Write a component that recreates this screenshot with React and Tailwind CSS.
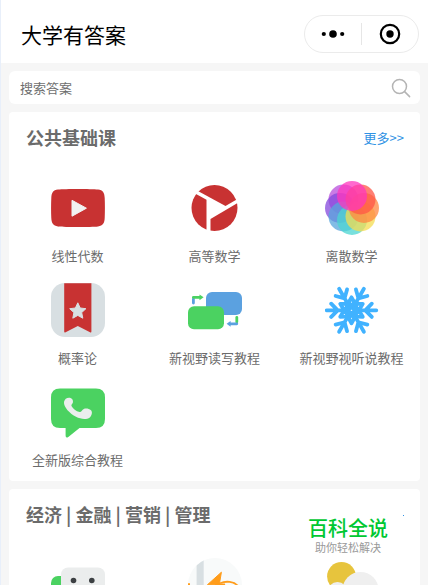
const VideoIcon = () => (
  <svg viewBox="0 0 54 54" className="size-[54px]">
    <path d="M7 8.6C14 7.8 40 7.8 47 8.6C52 9.2 53.5 12 53.7 17C54 23 54 31 53.7 37C53.5 42 52 44.8 47 45.4C40 46.2 14 46.2 7 45.4C2 44.8 .5 42 .3 37C0 31 0 23 .3 17C.5 12 2 9.2 7 8.6Z" fill="#c83232" />
    <path d="M21 19.3L35.4 27.2L21 35.2Z" fill="#f2f2f2" stroke="#f2f2f2" strokeLinejoin="round" />
  </svg>
);

const PlayCircleIcon = () => (
  <svg viewBox="0 0 54 54" className="size-[54px]">
    <clipPath id="play-circle">
      <circle cx="26.5" cy="27" r="23" />
    </clipPath>
    <g clipPath="url(#play-circle)" fill="#c83232">
      <path d="M0 8.5L18.5 18.8V54H0Z" />
      <path d="M0 4.5L37.5 25L54 15.4V0H0Z" />
      <path d="M54 19.3L22.5 38V54H54Z" />
    </g>
  </svg>
);

const petals = [
  { cx: 18.5, cy: 18.5, fill: "#b84fdc" },
  { cx: 15, cy: 27, fill: "#8448dc" },
  { cx: 18.5, cy: 35.5, fill: "#58a5dc" },
  { cx: 27, cy: 39, fill: "#4bd5d2" },
  { cx: 35.5, cy: 35.5, fill: "#f4dc50" },
  { cx: 39, cy: 27, fill: "#ff8740" },
  { cx: 35.5, cy: 18.5, fill: "#ff5546" },
  { cx: 27, cy: 15, fill: "#ff37be" },
];

const PetalsIcon = () => (
  <svg viewBox="0 0 54 54" className="size-[54px]">
    {petals.map((p, i) => (
      <circle key={i} cx={p.cx} cy={p.cy} r="15" fill={p.fill} opacity="0.75" />
    ))}
  </svg>
);

const BookmarkIcon = () => (
  <svg viewBox="0 0 54 54" className="size-[54px]">
    <rect width="54" height="54" rx="14" fill="#d8dfe2" />
    <path d="M13.2 .3H40.4V48.5Q40.4 50 39 49.3L26.8 43L14.6 49.3Q13.2 50 13.2 48.5Z" fill="#c83232" />
    <path d="M26.8 19.8L29.2 25L34.9 25.7L30.7 29.6L31.8 35.2L26.8 32.4L21.8 35.2L22.9 29.6L18.7 25.7L24.4 25Z" fill="#d8dfe2" stroke="#d8dfe2" strokeLinejoin="round" />
  </svg>
);

const ExchangeIcon = () => (
  <svg viewBox="0 0 54 54" className="size-[54px]">
    <rect x="18" y="9" width="36" height="23" rx="6" fill="#5ba1e0" />
    <rect x="0" y="23.3" width="36" height="23" rx="6" fill="#4bd261" />
    <path d="M5.4 16V20" stroke="#5ba1e0" strokeWidth="2.8" strokeLinecap="round" />
    <path d="M5.4 14.3H12" stroke="#4bd261" strokeWidth="2.8" strokeLinecap="round" />
    <path d="M11.5 11.4L15.6 14.3L11.5 17.2Z" fill="#4bd261" />
    <path d="M48.8 39V34.5" stroke="#4bd261" strokeWidth="2.8" strokeLinecap="round" />
    <path d="M48.8 40.8H42" stroke="#5ba1e0" strokeWidth="2.8" strokeLinecap="round" />
    <path d="M42.6 37.9L38.6 40.8L42.6 43.7Z" fill="#5ba1e0" />
  </svg>
);

const SnowflakeIcon = () => (
  <svg viewBox="0 0 54 54" className="size-[54px]">
    <g transform="translate(26.5 27.3)" stroke="#40b2ff" strokeWidth="3.8" strokeLinecap="round" strokeLinejoin="round" fill="none">
      {[0, 60, 120, 180, 240, 300].map((deg) => (
        <g key={deg} transform={`rotate(${deg})`}>
          <path d="M7 0H24.8M20.3 -6.6L13.8 0L20.3 6.6" />
          <path d="M0 -2.5L-2.6 -8.3L0 -13L2.6 -8.3Z" />
        </g>
      ))}
    </g>
  </svg>
);

const PhoneBubbleIcon = () => (
  <svg viewBox="0 0 54 54" className="size-[54px]">
    <path d="M9 3.5H45Q54 3.5 54 12.5V34Q54 43 45 43H28.5L17.3 51.9Q14.6 53.4 14.6 50.5V43H9Q0 43 0 34V12.5Q0 3.5 9 3.5Z" fill="#4bd261" />
    <path d="M13 17C13.6 13.8 16 12.4 19 12.8C21.3 13.2 22.4 15.6 21.9 17.6C21.5 19.2 20 19.6 20.5 21C22 24 25 26.3 28.6 27C30.6 27.2 31 25 32.8 24C34.8 23 38 23.6 40 25.2C41.8 27 40.8 30.6 38.8 32.4C35.6 34.8 29.6 34.2 25 31.8C19 28.8 12.4 22 13 17Z" fill="#ebeeee" />
  </svg>
);

const RobotIcon = () => (
  <svg viewBox="0 0 54 54" className="size-[54px]">
    <rect x="0" y="18" width="30" height="36" rx="7" fill="#4bd261" />
    <rect x="10" y="9.5" width="44" height="40" rx="7" fill="#ebeded" />
    <circle cx="22.5" cy="22.5" r="2.8" fill="#3c4043" />
    <circle cx="40.8" cy="22.5" r="2.8" fill="#3c4043" />
  </svg>
);

const BoltIcon = () => (
  <svg viewBox="0 0 54 54" className="size-[54px]">
    <clipPath id="bolt-circle">
      <circle cx="27" cy="27" r="27" />
    </clipPath>
    <circle cx="27" cy="27" r="27" fill="#f8fafa" />
    <path d="M8.6 0H15.7V54H8.6Z" fill="#d8dfe2" clipPath="url(#bolt-circle)" />
    <path d="M33.4 14.2L19.4 26.8H27L24 42L37 26H31.4Z" fill="#ff9c1a" stroke="#ff9c1a" strokeLinejoin="round" />
    <path d="M32 25.3C38 22.6 46 23.4 50 28" fill="none" stroke="#ff9c1a" strokeWidth="1.8" />
    <path d="M0 25.2H2V27H0Z" fill="#ff9c1a" />
  </svg>
);

const WeatherIcon = () => (
  <svg viewBox="0 0 54 54" className="size-[54px]">
    <circle cx="16.5" cy="18.5" r="14.4" fill="#e7c43d" />
    <circle cx="35.5" cy="32" r="18" fill="#efefef" />
    <circle cx="12.5" cy="34" r="10" fill="#efefef" />
  </svg>
);

const SearchIcon = () => (
  <svg viewBox="0 0 20 20" className="size-5" fill="none" stroke="#b4b4b4" strokeWidth="1.5" strokeLinecap="round">
    <circle cx="8.5" cy="8.5" r="7" />
    <path d="M13.6 13.6L18.6 18.6" />
  </svg>
);

const publicCourses = [
  { name: "线性代数", Icon: VideoIcon },
  { name: "高等数学", Icon: PlayCircleIcon },
  { name: "离散数学", Icon: PetalsIcon },
  { name: "概率论", Icon: BookmarkIcon },
  { name: "新视野读写教程", Icon: ExchangeIcon },
  { name: "新视野视听说教程", Icon: SnowflakeIcon },
  { name: "全新版综合教程", Icon: PhoneBubbleIcon },
];

const economyCourses = [{ Icon: RobotIcon }, { Icon: BoltIcon }, { Icon: WeatherIcon }];

const Header = () => (
  <header className="flex items-center justify-between bg-white pt-[15px] pr-[9px] pb-[10px] pl-5">
    <h1 className="text-[21px] leading-[38px] text-black">大学有答案</h1>
    <div className="flex h-[38px] w-[115px] items-center rounded-full border border-[#ebebeb]">
      <button aria-label="menu" className="flex flex-1 justify-center">
        <svg viewBox="0 0 24 10" className="h-[10px] w-6">
          <circle cx="2.8" cy="5" r="2.1" />
          <circle cx="12" cy="5" r="3.8" />
          <circle cx="21.2" cy="5" r="2.1" />
        </svg>
      </button>
      <span className="h-[22px] w-px bg-[#e6e6e6]" />
      <button aria-label="close" className="flex flex-1 justify-center">
        <svg viewBox="0 0 22 22" className="size-[22px]">
          <circle cx="11" cy="11" r="9.2" fill="none" stroke="#000" strokeWidth="2.2" />
          <circle cx="11" cy="11" r="3.7" />
        </svg>
      </button>
    </div>
  </header>
);

const CourseGrid = ({ items }) => (
  <div className="grid grid-cols-3">
    {items.map(({ name, Icon }, i) => (
      <button key={i} className="flex h-[102px] flex-col items-center pt-[9px]">
        <Icon />
        {name && <span className="mt-[11px] text-[13px] leading-5 whitespace-nowrap">{name}</span>}
      </button>
    ))}
  </div>
);

export default function App() {
  return (
    <div className="h-screen overflow-hidden border-l border-[#e8effa] bg-[#f6f6f6] font-['Noto_Sans_CJK_SC',sans-serif] text-[#6b6b6b]">
      <Header />
      <main className="flex flex-col gap-2 p-2">
        <form className="flex h-[33px] items-center rounded-md bg-white pr-[9px] pl-[11px]">
          <input
            type="text"
            aria-label="搜索答案"
            placeholder="搜索答案"
            className="min-w-0 flex-1 text-[13px] leading-5 outline-none placeholder:text-[#6e6e6e]"
          />
          <button type="button" aria-label="search">
            <SearchIcon />
          </button>
        </form>

        <section className="rounded-sm bg-white pb-[3px]">
          <div className="flex h-[60px] items-start justify-between pt-3 pr-4 pl-[17px]">
            <h2 className="text-[18px] leading-[26px] font-bold">公共基础课</h2>
            <a href="#more" className="text-[13px] leading-7 text-[#3092e4]">
              更多&gt;&gt;
            </a>
          </div>
          <CourseGrid items={publicCourses} />
        </section>

        <section className="relative rounded-sm bg-white">
          <div className="flex h-[60px] items-start justify-between pt-3 pr-4 pl-[17px]">
            <h2 className="text-[18px] leading-[26px] font-bold">经济 | 金融 | 营销 | 管理</h2>
            <span className="mt-[14px] size-px bg-[#3092e4]" />
          </div>
          <CourseGrid items={economyCourses} />
          <div className="absolute top-[29px] right-8 text-center font-['Liberation_Sans','Noto_Sans_CJK_SC',sans-serif]">
            <p className="text-[20px] leading-[23px] font-medium text-[#00c832]">百科全说</p>
            <p className="text-[11px] leading-[15px] text-[#999]">助你轻松解决</p>
          </div>
        </section>
      </main>
    </div>
  );
}
